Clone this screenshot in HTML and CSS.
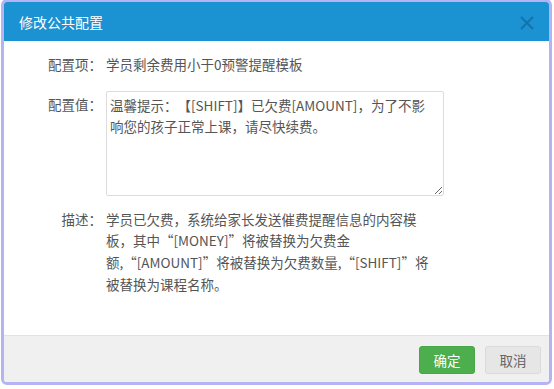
FILE: index.html
```html
<!DOCTYPE html>
<html lang="zh">
<head>
<meta charset="utf-8">
<link rel="stylesheet" href="styles.css">
</head>
<body>
<div class="dialog">
  <div class="header">
    <span class="title">修改公共配置</span>
    <span class="close"><svg width="14" height="14" viewBox="0 0 14 14"><path d="M1 1L13 13M13 1L1 13" stroke="currentColor" stroke-width="1.8" fill="none"/></svg></span>
  </div>
  <div class="body">
    <div class="row r1">
      <div class="label">配置项：</div>
      <div class="value">学员剩余费用小于0预警提醒模板</div>
    </div>
    <div class="row r2">
      <div class="label">配置值：</div>
      <textarea class="ta">温馨提示：【[SHIFT]】已欠费[AMOUNT]，为了不影响您的孩子正常上课，请尽快续费。</textarea>
    </div>
    <div class="row r3">
      <div class="label">描述：</div>
      <div class="value desc">学员已欠费，系统给家长发送催费提醒信息的内容模<br>板，其中“[MONEY]”将被替换为欠费金<br>额,“[AMOUNT]”将被替换为欠费数量,“[SHIFT]”将<br>被替换为课程名称。</div>
    </div>
  </div>
  <div class="footer">
    <button class="btn ok">确定</button>
    <button class="btn cancel">取消</button>
  </div>
</div>
</body>
</html>
```
FILE: styles.css
```css
html, body {
  margin: 0;
  padding: 0;
  background: #ffffff;
}
body {
  font-family: "Noto Sans CJK SC", sans-serif;
  font-size: 13.5px;
  color: #555;
  text-spacing-trim: space-all;
}
.dialog {
  width: 545px;
  height: 380px;
  margin: -1px 0 0 1px;
  border: 3px solid #b4b4f4;
  border-radius: 6px;
  overflow: hidden;
  display: flex;
  flex-direction: column;
  background: #fff;
}
.header {
  height: 39px;
  flex: none;
  background: #1b92d2;
  display: flex;
  align-items: center;
  justify-content: space-between;
  padding: 0 15px 0 15px;
}
.title {
  color: #fff;
  font-size: 14px;
  line-height: 20px;
}
.close {
  display: flex;
  color: #13679a;
  opacity: 0.75;
  margin-top: 2px;
}
.body {
  flex: 1;
  padding-top: 13px;
  display: flex;
  flex-direction: column;
}
.row {
  display: flex;
  align-items: flex-start;
  line-height: 21.5px;
}
.label {
  width: 98px;
  flex: none;
  text-align: right;
  margin-right: 4px;
}
.r1 { margin-bottom: 15px; }
.r2 .label { margin-top: 3px; }
.r3 { margin-top: 13px; }
.ta {
  width: 338px;
  height: 105px;
  box-sizing: border-box;
  border: 1px solid #dcdcdc;
  border-radius: 2px;
  padding: 3px 12px 3px 3px;
  margin: 0;
  font-family: "Noto Sans CJK SC", sans-serif;
  font-size: 13.5px;
  line-height: 21.5px;
  color: #555;
  outline: none;
  text-spacing-trim: space-all;
}
.desc {
  width: 340px;
  line-height: 21.7px;
}
.footer {
  height: 47px;
  flex: none;
  border-top: 1px solid #e2e2e2;
  background: #f0f0f0;
  display: flex;
  align-items: flex-start;
  justify-content: flex-end;
  gap: 10px;
  padding: 10px 8px 0 0;
  box-sizing: border-box;
}
.btn {
  width: 56px;
  height: 28px;
  border-radius: 3px;
  font-family: "Noto Sans CJK SC", sans-serif;
  font-size: 13.5px;
  padding: 0;
}
.ok {
  background: #4cae4c;
  border: 1px solid #45a745;
  color: #fff;
}
.cancel {
  background: #e6e6e6;
  border: 1px solid #dadada;
  color: #666;
}
```
